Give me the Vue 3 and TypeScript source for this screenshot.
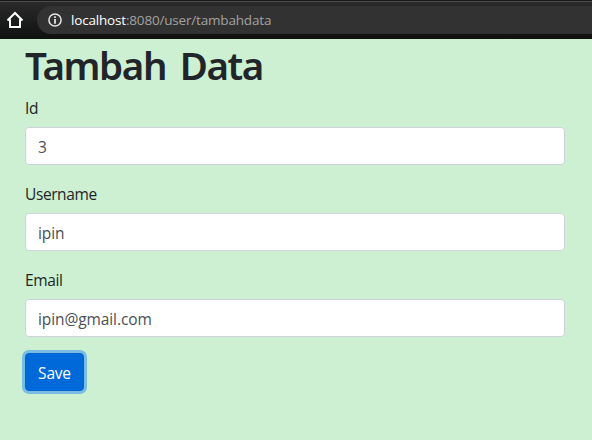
<script setup lang="ts">
import { ref } from 'vue'

interface Field {
  id: string
  label: string
  value: string
}

const fields = ref<Field[]>([
  { id: 'id', label: 'Id', value: '3' },
  { id: 'username', label: 'Username', value: 'ipin' },
  { id: 'email', label: 'Email', value: 'ipin@gmail.com' },
])
</script>

<template>
  <div class="window">
    <header class="toolbar">
      <svg class="home" width="18" height="18" viewBox="0 0 18 18" fill="none" stroke="#fff" stroke-width="2">
        <path d="M1.5 9.5 9 2l7.5 7.5M4 8.3V16h10V8.3" />
      </svg>
      <div class="address">
        <svg class="info" width="14" height="14" viewBox="0 0 14 14">
          <circle cx="7" cy="7" r="6.1" fill="none" stroke="#e4e4e4" stroke-width="1.5" />
          <path d="M6.1 3.2h1.8V5H6.1zM6.1 6h1.8v4.8H6.1z" fill="#e4e4e4" />
        </svg>
        <span class="url"><span class="host">localhost</span><span class="path">:8080/user/tambahdata</span></span>
      </div>
    </header>
    <main class="page">
      <h1>Tambah Data</h1>
      <form @submit.prevent>
        <div v-for="field in fields" :key="field.id" class="group">
          <label :for="field.id">{{ field.label }}</label>
          <input :id="field.id" v-model="field.value" type="text" />
        </div>
        <button type="submit">Save</button>
      </form>
    </main>
  </div>
</template>

<style>
body {
  margin: 0;
  background: #ccf0d1;
}
</style>

<style scoped>
.window {
  height: 440px;
  overflow: hidden;
  background: #ccf0d1;
  font-family: 'Open Sans', 'Noto Sans', sans-serif;
  font-size: 16px;
  line-height: 24px;
  color: #212529;
}
.toolbar {
  box-sizing: border-box;
  height: 39px;
  padding: 6px 0 5px 6px;
  display: flex;
  background: linear-gradient(#181818 0 1px, #4b4b4b 1px 2px, #2a2a2a 2px, #0f1110 100%);
}
.home {
  margin: 5px 13px 0 0;
  flex: none;
}
.address {
  flex: 1;
  display: flex;
  align-items: center;
  padding-left: 11px;
  border-radius: 14px 0 0 14px;
  background: #323232;
}
.info {
  margin-right: 9px;
}
.url {
  font-size: 13.5px;
  line-height: 20px;
  letter-spacing: -0.18px;
  white-space: nowrap;
}
.host {
  color: #fff;
}
.path {
  color: #a2a2a2;
}
.page {
  padding: 0 27px 0 25px;
}
h1 {
  box-sizing: border-box;
  height: 48px;
  margin: 0 0 8px;
  padding-top: 2px;
  font-family: 'Noto Sans', 'Open Sans', sans-serif;
  font-size: 38.5px;
  font-weight: 560;
  line-height: 48px;
  letter-spacing: -1.4px;
  word-spacing: 5px;
  white-space: nowrap;
}
.group {
  margin-bottom: 16px;
}
label {
  box-sizing: border-box;
  display: block;
  height: 24px;
  padding-top: 1px;
  margin-bottom: 8px;
  font-size: 15.5px;
  font-weight: 400;
  letter-spacing: -0.4px;
}
input {
  box-sizing: border-box;
  display: block;
  width: 100%;
  height: 38px;
  padding: 7px 12px 5px;
  border: 1px solid #ced4da;
  border-radius: 4px;
  background: #fff;
  color: #495057;
  font: 400 15.5px/24px 'Open Sans', 'Noto Sans', sans-serif;
  letter-spacing: -0.1px;
  outline: none;
}
button {
  display: block;
  box-sizing: border-box;
  width: 59px;
  height: 38px;
  padding: 2px 0 0;
  border: 1px solid #0062cc;
  border-radius: 4px;
  background: #0069d9;
  color: #fff;
  font: 15.5px/24px 'Open Sans', 'Noto Sans', sans-serif;
  letter-spacing: -0.2px;
  box-shadow: 0 0 0 3px #79bde4;
}
</style>
